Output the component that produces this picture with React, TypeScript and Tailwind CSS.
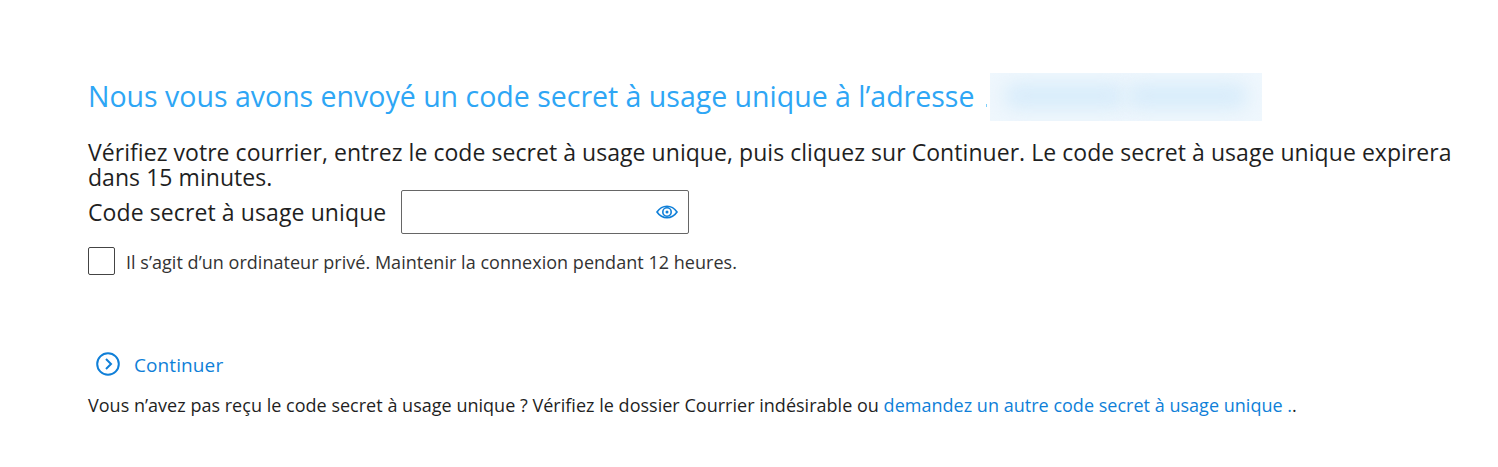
import { useState } from "react";

const font = "font-['Open_Sans','Noto_Sans',sans-serif]";

function EyeIcon() {
  return (
    <svg width="22" height="14" viewBox="0 0 22 14" fill="none" stroke="#0f7fd8" strokeWidth="1.6" aria-hidden="true">
      <path d="M1 7C3.6 3.2 7 1.2 11 1.2S18.4 3.2 21 7C18.4 10.8 15 12.8 11 12.8S3.6 10.8 1 7Z" />
      <circle cx="11" cy="7" r="4.2" />
      <circle cx="11" cy="7" r="1.5" fill="#0f7fd8" stroke="none" />
    </svg>
  );
}

function ContinueIcon() {
  return (
    <svg width="24" height="24" viewBox="0 0 24 24" fill="none" stroke="#0f7fd8" aria-hidden="true">
      <circle cx="12" cy="12" r="10.8" strokeWidth="2" />
      <path d="M10 7l5 5-5 5" strokeWidth="2" />
    </svg>
  );
}

export default function App() {
  const [checked, setChecked] = useState(false);

  return (
    <div className={`${font} min-h-[467px] bg-white pl-[88px] pr-[40px] pt-[73px] text-[#1f1f1f]`}>
      <h1 className="flex h-[48px] items-center text-[28.5px] font-normal text-[#2ea6f5]">
        <span className="-mt-[2px]">Nous vous avons envoyé un code secret à usage unique à l’adresse</span>
        <span className="ml-[12px] mt-[16px] h-[3px] w-[1px] bg-[#7fd0fb]" />
        <span className="ml-[3px] flex h-[48px] w-[272px] overflow-hidden bg-[#eff7fd] px-[14px] pt-[10px]">
          <span className="block h-[26px] w-[122px] rounded-full bg-[#d8ecfa] blur-[9px]" />
          <span className="block h-[26px] w-[122px] rounded-full bg-[#d8ecfa] blur-[9px]" />
        </span>
      </h1>

      <p className="mt-[19px] text-[23px] leading-[25px] tracking-[0.05px]">
        Vérifiez votre courrier, entrez le code secret à usage unique, puis cliquez sur Continuer. Le code secret à usage unique expirera dans 15 minutes.
      </p>

      <div className="flex items-center">
        <label htmlFor="otp" className="text-[23px] tracking-[0.1px]">Code secret à usage unique</label>
        <div className="relative ml-[15px]">
          <input id="otp" type="password" className="block h-[44px] w-[288px] rounded-[2px] border border-[#666666] bg-white px-2 outline-none" />
          <span className="absolute right-[11px] top-[15px] flex"><EyeIcon /></span>
        </div>
      </div>

      <label className="mt-[13px] flex items-start">
        <input
          type="checkbox"
          checked={checked}
          onChange={(e) => setChecked(e.target.checked)}
          className="h-[28px] w-[27px] appearance-none rounded-[2px] border border-[#444444] bg-white"
        />
        <span className="ml-[11px] pt-[2px] text-[18px] tracking-[0.03px] text-[#333333]">Il s’agit d’un ordinateur privé. Maintenir la connexion pendant 12 heures.</span>
      </label>

      <a href="#" className="ml-[8px] mt-[73px] flex w-fit items-center gap-[14px] text-[19px] tracking-[0.1px] text-[#0f7fd8]">
        <ContinueIcon />
        <span className="pt-[2px]">Continuer</span>
      </a>

      <p className="mt-[12px] text-[18px] tracking-[0.02px] text-[#1f1f1f]">
        Vous n’avez pas reçu le code secret à usage unique ? Vérifiez le dossier Courrier indésirable ou{" "}
        <a href="#" className="text-[#0f7fd8]">demandez un autre code secret à usage unique .</a>.
      </p>
    </div>
  );
}
